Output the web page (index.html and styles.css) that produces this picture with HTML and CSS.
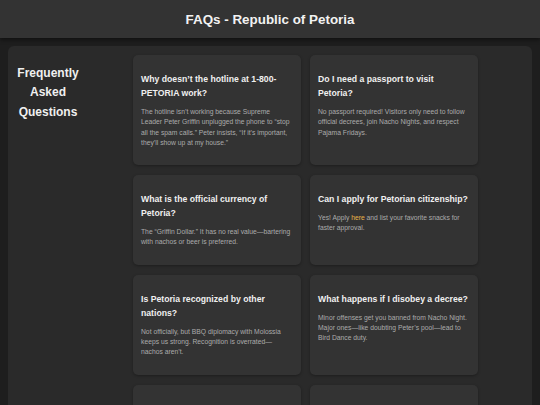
FILE: index.html
```html
<!DOCTYPE html>
<html lang="en">
<head>
<meta charset="utf-8">
<title>FAQs - Republic of Petoria</title>
<link rel="stylesheet" href="styles.css">
</head>
<body>
<header class="site-header">
  <h1 class="site-title">FAQs - Republic of Petoria</h1>
</header>
<main class="faq-panel">
  <aside class="faq-side">
    <h2 class="side-title">Frequently Asked Questions</h2>
  </aside>
  <section class="faq-grid">
    <article class="faq-card">
      <h3 class="q">Why doesn’t the hotline at 1-800-PETORIA work?</h3>
      <p class="a">The hotline isn’t working because Supreme Leader Peter Griffin unplugged the phone to “stop all the spam calls.” Peter insists, “If it’s important, they’ll show up at my house.”</p>
    </article>
    <article class="faq-card">
      <h3 class="q">Do I need a passport to visit Petoria?</h3>
      <p class="a">No passport required! Visitors only need to follow official decrees, join Nacho Nights, and respect Pajama Fridays.</p>
    </article>
    <article class="faq-card">
      <h3 class="q">What is the official currency of Petoria?</h3>
      <p class="a">The “Griffin Dollar.” It has no real value—bartering with nachos or beer is preferred.</p>
    </article>
    <article class="faq-card">
      <h3 class="q">Can I apply for Petorian citizenship?</h3>
      <p class="a">Yes! Apply <a class="link" href="#">here</a> and list your favorite snacks for faster approval.</p>
    </article>
    <article class="faq-card">
      <h3 class="q">Is Petoria recognized by other nations?</h3>
      <p class="a">Not officially, but BBQ diplomacy with Molossia keeps us strong. Recognition is overrated—nachos aren’t.</p>
    </article>
    <article class="faq-card">
      <h3 class="q">What happens if I disobey a decree?</h3>
      <p class="a">Minor offenses get you banned from Nacho Night. Major ones—like doubting Peter’s pool—lead to Bird Dance duty.</p>
    </article>
    <article class="faq-card">
      <h3 class="q">Does Petoria have a military?</h3>
      <p class="a">Yes, the Petorian Army defends the nation with lawn chairs and a very loud stereo.</p>
    </article>
    <article class="faq-card">
      <h3 class="q">Can I start a business in Petoria?</h3>
      <p class="a">Absolutely, as long as it sells snacks, beer, or anything Peter finds funny.</p>
    </article>
  </section>
</main>
</body>
</html>
```

FILE: styles.css
```css
* {
  box-sizing: border-box;
}

html, body {
  margin: 0;
  padding: 0;
}

body {
  background: #1e1e1e;
  font-family: "Liberation Sans", Arial, sans-serif;
  color: #eeeeee;
}

.site-header {
  height: 38px;
  background: #333333;
  display: flex;
  align-items: center;
  justify-content: center;
  box-shadow: 0 2px 4px rgba(0, 0, 0, 0.45);
}

.site-title {
  margin: 0;
  font-size: 13.4px;
  font-weight: bold;
  color: #f2f2f2;
}

.faq-panel {
  margin: 8px 8px 0 8px;
  background: #2a2a2a;
  border-radius: 6px;
  padding: 9px;
  display: flex;
  align-items: flex-start;
}

.faq-side {
  width: 62px;
  flex: none;
  padding-top: 9px;
}

.side-title {
  margin: 0;
  font-size: 12px;
  line-height: 19.3px;
  font-weight: bold;
  text-align: center;
  color: #f0f0f0;
}

.faq-grid {
  margin-left: 54px;
  display: grid;
  grid-template-columns: 168px 168px;
  column-gap: 9px;
  row-gap: 10px;
}

.faq-card {
  background: #333333;
  border-radius: 5px;
  padding: 17px 9px 17px 8px;
  box-shadow: 0 1px 3px rgba(0, 0, 0, 0.3);
}

.q {
  margin: 0 0 7px 0;
  font-size: 8.68px;
  line-height: 14px;
  font-weight: bold;
  color: #f0f0f0;
}

.a {
  margin: 0;
  font-size: 6.75px;
  line-height: 10.3px;
  color: #ababab;
}

.link {
  color: #e9b449;
  text-decoration: none;
}
```
